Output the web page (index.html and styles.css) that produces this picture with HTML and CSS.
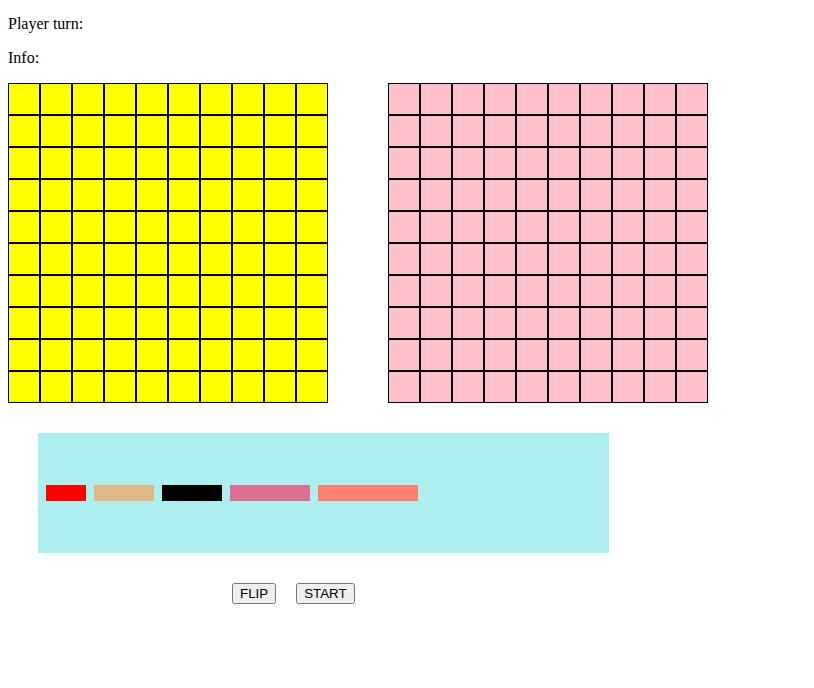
FILE: index.html
```html
<!DOCTYPE html>
<html>
<head>
<meta charset="utf-8">
<link rel="stylesheet" href="styles.css">
</head>
<body>
<p class="line line-first">Player turn:</p>
<p class="line">Info:</p>
<div class="boards">
  <div class="board board-yellow" id="b1"></div>
  <div class="board board-pink" id="b2"></div>
</div>
<div class="dock">
  <div class="ship ship-red"></div>
  <div class="ship ship-tan"></div>
  <div class="ship ship-black"></div>
  <div class="ship ship-violet"></div>
  <div class="ship ship-salmon"></div>
</div>
<div class="controls">
  <button class="btn">FLIP</button>
  <button class="btn">START</button>
</div>
<script>
for (const id of ["b1","b2"]) {
  const b = document.getElementById(id);
  for (let i = 0; i < 100; i++) {
    const c = document.createElement("div");
    c.className = "cell";
    b.appendChild(c);
  }
}
</script>
</body>
</html>
```
FILE: styles.css
```css
body {
  margin: 0 8px 8px;
  font-family: "Liberation Serif", serif;
  font-size: 16px;
  color: #000;
}
.line {
  margin: 16px 0;
}
.line-first {
  margin-top: 15px;
}
.boards {
  display: flex;
  gap: 60px;
}
.board {
  display: grid;
  grid-template-columns: repeat(10, 32px);
  grid-auto-rows: 32px;
  width: 320px;
}
.cell {
  border: 1px solid #000;
}
.board-yellow .cell { background: #ffff00; }
.board-pink .cell { background: #ffc0cb; }
.dock {
  margin: 30px 0 0 30px;
  width: 563px;
  height: 120px;
  padding-left: 8px;
  background: #afeeee;
  display: flex;
  align-items: center;
  gap: 8px;
}
.ship { height: 16px; }
.ship-red { width: 40px; background: #ff0000; }
.ship-tan { width: 60px; background: #deb887; }
.ship-black { width: 60px; background: #000000; }
.ship-violet { width: 80px; background: #db7093; }
.ship-salmon { width: 100px; background: #fa8072; }
.controls {
  margin-top: 30px;
  padding-left: 224px;
  display: flex;
  gap: 20px;
}
.btn {
  font-family: "Liberation Sans", Arial, sans-serif;
  font-size: 13.333px;
}
```
